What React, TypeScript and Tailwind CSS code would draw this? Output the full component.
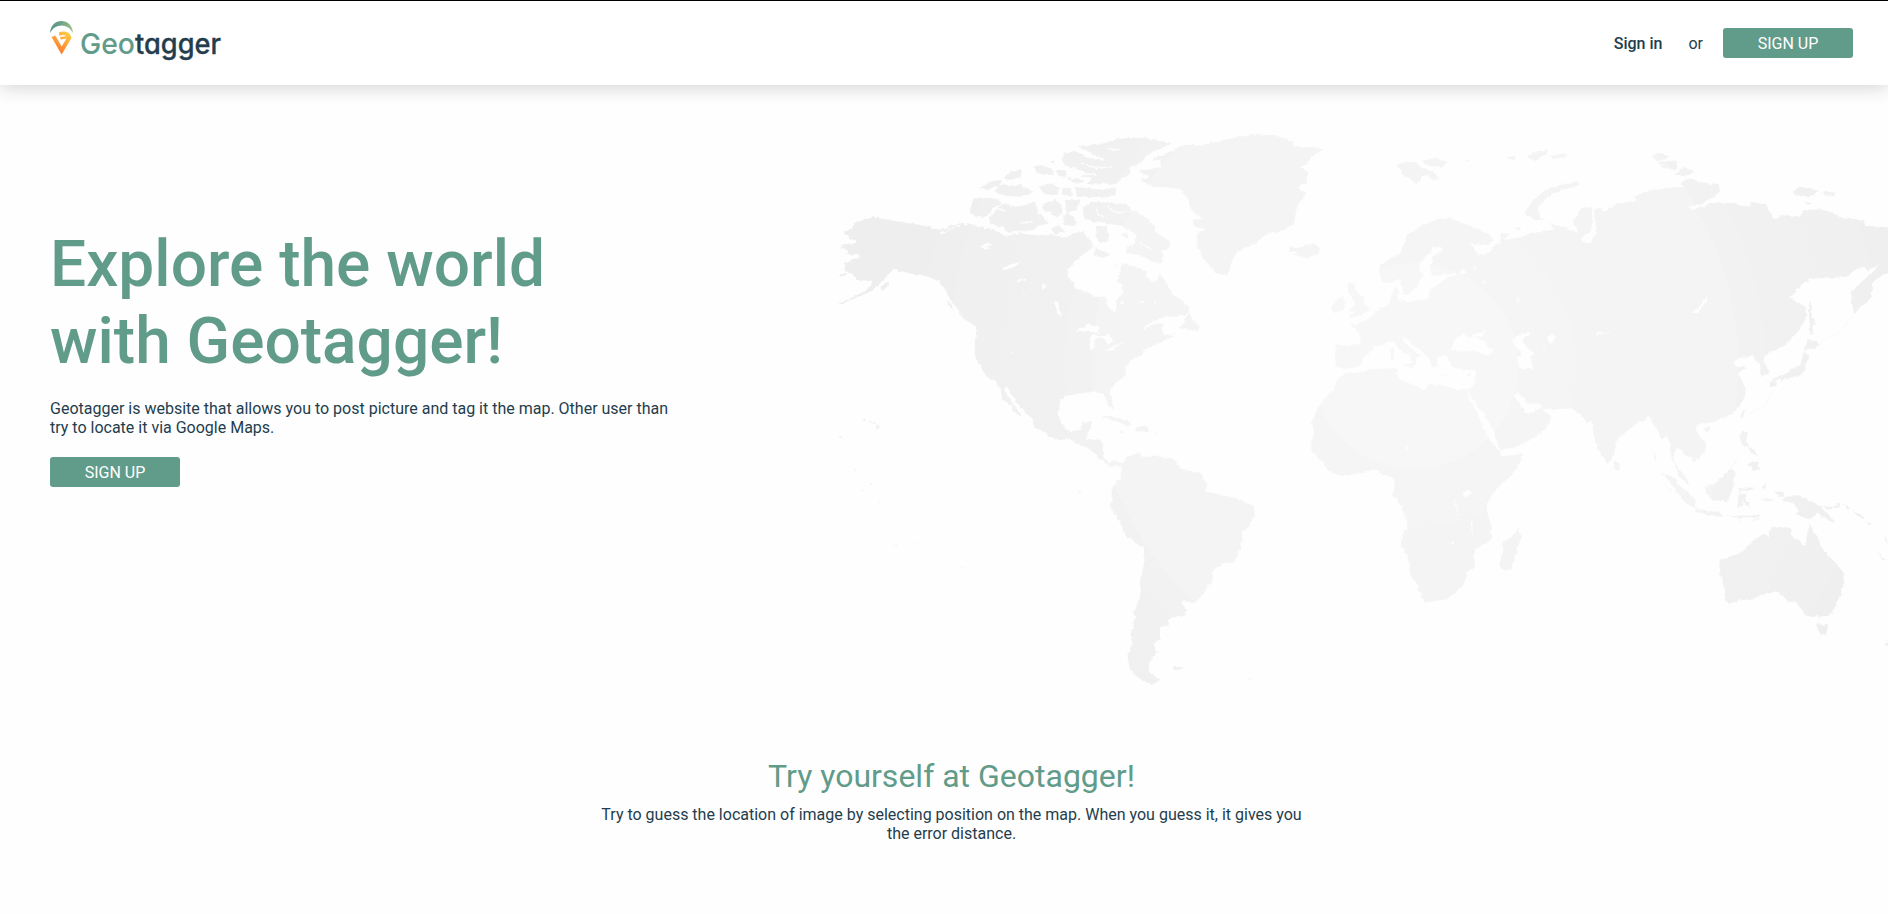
import React from "react";

function LogoMark() {
  return (
    <svg width="24" height="36" viewBox="0 0 24 36" className="shrink-0">
      <defs>
        <linearGradient id="arc" x1="0" y1="0" x2="1" y2="0">
          <stop offset="0.35" stopColor="#619b8a" />
          <stop offset="1" stopColor="#a1c181" />
        </linearGradient>
        <linearGradient id="pin" gradientUnits="userSpaceOnUse" x1="18" y1="13" x2="8" y2="30">
          <stop offset="0" stopColor="#fcca46" />
          <stop offset="1" stopColor="#fe7f2d" />
        </linearGradient>
      </defs>
      <path d="M0 13C0.600 5 5.500 1 11.500 1S22.400 5 23 13C20.500 8.200 16.500 5.400 11.500 5.400S2.500 8.200 0 13Z" fill="url(#arc)" />
      <path d="M1.500 17L5.300 15.500L11.700 26.500L16.500 18.500L10.800 19.500L10 17L16.500 16C14.500 14.900 12.500 14.800 9.300 15.800L9 12.200C14.500 10.500 20.500 12 21.500 18L11.600 34.500Z" fill="url(#pin)" />
    </svg>
  );
}

function Logo() {
  return (
    <a href="#" className="flex items-start" aria-label="Geotagger">
      <LogoMark />
      <svg width="148" height="44" viewBox="0 0 148 44" className="ml-1.5" fontFamily="Inter, sans-serif" style={{ fontFeatureSettings: '"cv11"' }}>
        <text x="0" y="33.500" fontSize="29" fontWeight="500" fill="#619b8a" textLength="55" lengthAdjust="spacingAndGlyphs">Geo</text>
        <text x="55" y="33.500" fontSize="28" fontWeight="500" fill="#233d4d" stroke="#233d4d" strokeWidth="0.300" textLength="86" lengthAdjust="spacingAndGlyphs">tagger</text>
      </svg>
    </a>
  );
}

function SignUp() {
  return (
    <button className="h-[30px] w-[130px] rounded-[3px] bg-[#619b8a] text-base leading-[19px] text-white">SIGN UP</button>
  );
}

const northAmerica =
  "M160 292L195 298L240 305L285 312L330 322L360 330L390 318L425 308L440 318L445 308L470 320L500 325L540 338L560 347L600 340L640 345L690 345L735 352L760 340L790 335L800 350L815 365L822 380L795 400L765 425L745 450L743 470L760 485L765 505L800 515L830 530L858 530L862 560L885 578L890 555L887 540L910 520L908 495L890 485L900 455L905 430L935 435L960 445L980 455L980 475L990 485L1005 485L1020 460L1040 490L1060 525L1085 540L1105 560L1108 578L1075 590L1040 590L1000 600L975 620L968 630L1000 612L1040 608L1025 625L1030 640L1055 645L1070 640L1050 655L1015 670L990 680L970 690L968 705L945 712L930 725L915 740L918 765L900 780L875 800L868 815L872 830L880 850L878 865L868 860L858 840L850 820L830 818L815 815L790 820L760 823L735 828L720 842L718 870L713 885L722 905L735 925L750 935L780 928L788 908L815 903L812 925L800 945L800 960L835 958L850 968L848 1000L850 1015L870 1028L885 1022L910 1032L905 1040L885 1032L875 1042L860 1032L835 1015L825 998L800 982L770 972L740 955L725 962L690 950L660 930L640 915L640 900L620 880L600 860L585 840L570 815L558 800L552 805L560 825L575 845L590 870L605 885L600 888L580 875L575 855L550 840L545 820L535 795L525 782L500 770L485 745L470 720L464 700L465 670L468 630L460 615L430 595L415 570L395 545L375 510L360 485L335 475L310 465L280 462L250 455L220 448L200 470L180 490L150 515L110 532L60 555L58 549L85 540L130 515L155 495L155 482L110 480L100 462L75 455L75 432L95 420L120 412L115 405L80 402L85 390L60 382L75 372L115 370L85 350L70 338L95 325L105 310L130 300Z";

const arcticIslands = [
  "M775 82L850 70L890 58L940 52L1000 58L1055 70L1040 80L990 100L965 125L930 140L932 160L895 185L880 193L800 192L815 172L780 170L795 155L735 135L725 118L735 100L765 93L810 115L850 122L815 100Z",
  "M460 235L495 232L525 236L548 248L520 265L500 290L470 290L450 278Z",
  "M550 250L585 262L615 255L640 245L650 255L655 280L680 300L685 312L660 315L640 330L600 335L560 335L545 320L510 312L505 300L520 275Z",
  "M480 205L510 185L548 178L540 195L500 210Z",
  "M530 205L545 193L575 200L600 195L620 205L640 215L600 230L560 228L525 215Z",
  "M550 175L570 155L605 150L605 170L570 180Z",
  "M640 140L665 135L700 150L702 165L670 165L650 155Z",
  "M655 200L700 190L718 205L712 225L670 222Z",
  "M706 150L735 150L742 168L718 172Z",
  "M690 123L706 122L702 130ZM740 172L775 178L795 186L760 188Z",
  "M765 200L830 208L890 205L885 225L850 232L770 230Z",
  "M725 205L755 205L755 228L728 226Z",
  "M670 250L710 240L728 262L725 285L705 290L690 275L668 268Z",
  "M735 240L780 240L770 270L740 278Z",
  "M730 285L750 280L768 305L760 322L730 312Z",
  "M690 325L715 315L735 335L710 342Z",
  "M790 262L815 245L880 248L920 252L935 270L975 290L1000 310L1005 335L1055 368L1045 385L1025 390L1028 418L1020 432L990 420L960 405L920 400L918 385L945 370L950 345L930 330L905 318L870 312L850 305L820 308L795 295L785 280Z",
  "M828 318L860 318L868 345L860 370L835 368L828 345Z",
  "M820 410L828 382L850 395L872 402L860 412L840 408Z",
  "M905 345L918 338L928 348L920 357Z",
  "M885 432L895 430L890 440Z",
  "M370 485L385 510L400 530L388 525ZM380 540L392 550L404 572L390 562Z",
  "M430 590L462 595L485 622L465 615Z",
  "M180 502L204 485L202 500L185 512Z",
  "M60 462L76 462L74 468L60 466Z",
  "M840 895L865 886L900 895L935 912L920 918L890 904L862 896Z",
  "M945 920L970 918L992 932L965 935L945 933ZM898 932L915 936L905 940ZM1000 932L1018 935L1008 938Z",
  "M168 914L179 921L169 929ZM148 902L155 905L150 909ZM130 896L138 898L134 901ZM158 908L166 911L160 913ZM59 949L66 952L61 955Z",
];

const eurasia =
  "M450 295L490 310L530 325L570 345L580 360L560 375L520 372L505 368L525 385L530 400L550 405L575 390L580 375L600 370L602 345L610 335L625 345L610 360L640 355L690 340L740 335L762 328L745 310L790 320L835 338L820 300L835 285L845 260L875 265L878 300L872 335L845 350L845 365L870 370L890 340L885 300L882 275L895 262L915 275L934 262L955 250L1010 243L1000 230L1040 215L1100 205L1150 200L1145 185L1170 175L1200 185L1255 195L1262 210L1250 225L1220 245L1280 248L1350 260L1355 245L1400 255L1410 275L1425 298L1440 285L1500 290L1510 270L1560 268L1600 280L1625 295L1690 300L1700 318L1770 322V460L1745 465L1720 485L1715 510L1715 535L1690 555L1662 582L1655 540L1655 515L1680 490L1715 460L1738 432L1722 438L1705 455L1694 440L1670 445L1640 470L1580 475L1530 475L1500 500L1465 535L1490 545L1515 560L1520 590L1505 620L1480 650L1455 675L1430 690L1410 695L1390 715L1400 740L1407 760L1380 770L1382 740L1365 715L1355 705L1325 718L1335 705L1300 725L1310 740L1340 740L1315 760L1325 780L1338 800L1335 830L1315 865L1290 885L1250 900L1225 910L1195 910L1185 925L1200 950L1217 970L1217 995L1195 1015L1180 1028L1175 1012L1150 1000L1135 985L1128 985L1120 1020L1135 1045L1155 1065L1169 1098L1139 1070L1126 1040L1114 1015L1109 970L1104 950L1084 958L1072 930L1054 900L1044 885L1034 900L1009 910L974 940L946 965L944 1000L934 1020L922 1032L904 1005L884 960L874 900L860 910L850 890L815 865L770 868L725 865L720 850L690 852L665 830L655 815L645 820L650 840L665 860L680 878L705 875L722 858L730 870L755 890L735 930L690 960L650 980L600 990L590 965L575 920L550 880L515 835L500 808L515 805L528 765L525 750L490 750L455 740L445 715L440 705L410 712L415 740L400 740L385 715L375 705L365 690L335 675L320 655L308 652L310 665L340 690L365 710L350 712L350 730L335 745L310 738L340 728L325 705L300 690L285 670L270 663L245 675L225 680L205 700L190 715L185 735L155 745L130 745L108 740L105 710L107 675L150 675L178 672L180 650L165 625L150 615L185 608L210 592L235 570L270 550L275 520L290 500L300 515L290 540L330 545L385 535L390 510L420 490L440 472L470 465L465 460L420 468L395 465L390 440L400 410L428 390L425 382L400 382L390 400L360 425L358 450L370 465L350 500L325 525L312 525L300 480L285 480L270 492L245 485L238 440L260 420L300 400L320 345L370 315L410 298Z";

const eurasiaIslands = [
  "M145 488L165 488L170 515L190 530L195 550L208 572L185 585L145 595L162 575L148 572L165 555L158 535L140 510Z",
  "M100 548L125 530L135 540L132 570L105 578L95 570Z",
  "M292 135L315 125L350 128L365 145L400 155L415 175L400 180L375 160L365 175L350 193L335 180L310 165ZM365 125L400 115L445 125L430 140L385 138Z",
  "M675 280L700 240L735 210L790 192L835 186L838 195L790 210L750 225L720 255L715 280L732 300L705 302Z",
  "M615 115L645 108L645 120ZM680 108L700 98L745 90L740 105L700 125ZM750 105L803 100L795 110L760 118ZM485 122L508 119L500 124Z",
  "M645 325L660 320L662 332ZM272 685L282 680L282 720L272 720ZM416 764L438 764L430 769ZM495 768L515 760L505 770Z",
  "M1055 108L1075 98L1105 105L1100 118L1065 120ZM1070 125L1130 122L1132 148L1090 145ZM1125 165L1150 140L1185 155L1165 165Z",
  "M1478 212L1500 200L1555 212L1540 228L1490 228ZM1565 215L1605 218L1605 228L1575 226ZM1508 245L1540 250L1520 255Z",
  "M1525 545L1535 550L1535 590L1552 612L1538 615L1535 640L1544 642L1530 645Z",
  "M1524 655L1555 670L1545 688L1525 685L1510 695L1518 675Z",
  "M1510 695L1525 705L1522 725L1510 762L1485 772L1460 775L1430 780L1415 785L1420 775L1460 762L1480 745L1500 735L1510 715Z",
  "M1412 785L1430 785L1425 802L1412 800ZM1438 775L1455 772L1445 785Z",
  "M1323 875L1335 866L1330 890L1322 895ZM1212 925L1228 918L1232 928L1218 938Z",
  "M940 1020L958 1030L960 1050L945 1052Z",
];

const africa =
  "M168 95L190 100L250 88L320 85L325 115L360 130L405 150L415 132L450 135L500 148L530 148L540 180L565 225L580 265L600 300L625 330L640 350L700 338L690 370L665 405L620 445L590 490L595 530L605 560L603 600L560 625L550 645L555 680L530 695L525 725L500 755L470 778L405 788L393 770L380 730L362 705L355 660L333 615L335 590L352 560L345 525L330 490L307 460L315 425L300 408L275 405L265 390L240 390L205 402L150 408L115 390L100 370L65 335L62 305L72 275L65 245L85 205L100 180L130 150L140 120ZM685 563L695 590L680 630L665 685L645 695L630 685L630 660L640 640L637 605L665 590Z";

const southAmerica =
  "M185 75L200 50L240 38L245 50L300 50L340 58L370 90L420 98L443 135L435 155L490 165L540 178L580 198L585 225L565 260L547 275L545 310L525 365L490 370L458 395L455 425L430 460L405 488L365 483L380 510L370 528L328 533L325 558L300 560L300 600L280 610L293 635L265 670L270 695L300 722L275 735L235 715L210 690L203 650L215 620L215 580L225 530L222 515L240 470L243 420L252 370L252 325L200 290L180 245L150 200L155 180L155 155L165 130L185 110ZM338 682L368 680L360 690L342 690ZM555 710L575 720L565 718ZM54 150L64 154L58 158Z";

const greenland =
  "M175 155L245 140L240 120L215 118L270 95L310 75L365 75L430 60L530 42L600 50L640 65L640 80L700 82L732 88L700 105L680 130L660 140L685 160L680 190L655 200L680 220L650 260L645 300L640 315L600 335L550 345L530 370L490 385L465 405L455 435L440 468L405 458L375 420L350 380L350 345L375 325L345 320L340 300L375 295L350 285L330 265L325 235L300 208L270 203L215 200L180 180L210 168ZM625 378L650 385L670 375L700 372L722 385L715 400L680 415L640 405L655 398L628 392ZM328 578L335 600L355 615L355 633L300 625L320 590Z";

const oceania = [
  "M665 370L680 400L690 410L700 445L725 470L740 485L765 515L768 550L755 590L738 625L735 640L700 652L685 645L675 652L650 645L635 620L620 605L600 605L590 590L570 575L520 585L490 598L455 600L430 612L408 600L412 575L395 520L395 480L430 468L465 455L485 430L520 402L540 412L550 385L575 378L612 385L608 405L650 438L658 420L658 385Z",
  "M687 670L705 676L720 671L719 688L712 703L700 706L690 690Z",
  "M352 258L375 255L400 230L430 205L445 220L435 240L438 260L425 290L415 305L370 298L355 280Z",
  "M222 218L250 228L285 265L310 285L322 300L320 325L290 305L270 280L250 250Z",
  "M320 325L350 330L400 338L405 350L360 345L325 335Z",
  "M410 345L440 348L490 346L520 344L510 351L450 353ZM490 363L520 349L510 359ZM445 357L462 362L455 367Z",
  "M455 263L500 262L503 253L495 269L460 271L458 283L478 281L470 295L488 318L475 317L465 300L460 322L448 320L450 298Z",
  "M560 275L585 275L590 290L570 290ZM600 290L630 285L700 320L712 335L745 368L720 362L690 340L665 358L625 345L630 325L610 308L580 300Z",
  "M700 319L735 321L758 306L755 322L725 329ZM762 309L786 325L780 329ZM790 328L832 355L820 357ZM835 360L852 370L845 373Z",
  "M460 95L475 95L475 120L485 140L465 138L455 115ZM478 140L500 150L507 168L490 160ZM480 193L510 180L515 210L498 212ZM428 203L459 158L436 196Z",
  "M524 260L533 248L531 277ZM510 299L560 296L550 303ZM868 459L896 481L885 481ZM889 408L900 427L894 427ZM890 735L900 718V738Z",
  "M197 145L202 165L206 192L199 175ZM224 246L262 287L244 270Z",
];

const lakes = [
  "M480 378L500 370L520 375L500 380L510 388L490 385Z",
  "M545 448L570 435L600 425L585 440L555 450Z",
  "M700 548L715 545L725 590L710 580Z",
  "M770 635L800 612L835 622L833 638L805 632Z",
  "M808 660L820 645L845 645L825 658L820 690L810 690Z",
  "M840 645L870 645L880 660L865 675L855 660ZM848 692L890 675L914 665L880 688Z",
  "M570 692L580 700L576 705ZM608 518L618 522L612 524ZM670 490L675 500L668 510Z",
];

const inlandSeas = [
  "M455 690L465 655L490 640L505 652L535 655L585 695L560 705L520 690L485 695ZM515 645L560 630L545 650L525 652Z",
  "M635 660L650 648L690 635L685 650L668 655L670 670L690 690L705 700L690 710L698 748L660 745L652 730L655 710L665 705Z",
  "M742 650L755 640L768 650L758 668L742 665ZM730 690L738 675L732 695Z",
  "M478 450L492 445L498 462L482 462ZM520 435L530 445L522 450ZM545 478L558 490L550 490Z",
  "M1222 528L1220 545L1195 575L1170 580L1195 565ZM882 650L895 638L935 638L900 643ZM650 540L668 530L650 548Z",
  "M1162 265L1255 232L1225 255L1180 270ZM645 818L665 838L640 830Z",
];

const africanLakes =
  "M522 455L540 448L545 460L530 472L520 468ZM497 470L500 510L512 530L505 528L495 500ZM542 540L547 545L547 575L552 588L545 580ZM347 315L362 325L352 328ZM480 612L495 605L488 614ZM560 410L566 425L562 422Z";

function WorldMap() {
  return (
    <svg width="1068" height="620" viewBox="0 0 3204 1860" className="shrink-0" aria-hidden="true">
      <defs>
        <radialGradient id="rings" gradientUnits="userSpaceOnUse" cx="1785" cy="738" r="2000">
          <stop offset="0.1545" stopColor="#f7f7f7" />
          <stop offset="0.1545" stopColor="#f5f5f5" />
          <stop offset="0.2415" stopColor="#f5f5f5" />
          <stop offset="0.2415" stopColor="#f4f4f4" />
          <stop offset="0.4845" stopColor="#f4f4f4" />
          <stop offset="0.4845" stopColor="#f2f2f3" />
          <stop offset="0.525" stopColor="#f2f2f3" />
          <stop offset="0.525" stopColor="#f1f1f1" />
          <stop offset="0.699" stopColor="#f0f0f0" />
          <stop offset="0.699" stopColor="#efeff0" />
          <stop offset="0.744" stopColor="#efeff0" />
          <stop offset="0.744" stopColor="#eeeeee" />
        </radialGradient>
        <filter id="coast" filterUnits="userSpaceOnUse" x="0" y="0" width="3204" height="1860" colorInterpolationFilters="sRGB">
          <feTurbulence type="fractalNoise" baseFrequency="0.07" numOctaves="3" seed="4" />
          <feDisplacementMap in="SourceGraphic" scale="12" xChannelSelector="R" yChannelSelector="G" />
        </filter>
        <mask id="land" maskUnits="userSpaceOnUse" x="0" y="0" width="3204" height="1860">
          <g filter="url(#coast)" fill="#fff">
            <path d={northAmerica} />
            {arcticIslands.map((d) => <path key={d} d={d} />)}
            <g transform="translate(780 0)"><path d={greenland} /></g>
            <g transform="translate(720 960)"><path d={southAmerica} /></g>
            <g transform="translate(1440 0)">
              <path d={eurasia} />
              {eurasiaIslands.map((d) => <path key={d} d={d} />)}
            </g>
            <g transform="translate(1410 660)"><path d={africa} /></g>
            <g transform="translate(2304 840)">
              {oceania.map((d) => <path key={d} d={d} />)}
            </g>
            <g fill="#000">
              {lakes.map((d) => <path key={d} d={d} />)}
              <g transform="translate(1440 0)">
                {inlandSeas.map((d) => <path key={d} d={d} />)}
              </g>
              <g transform="translate(1410 660)"><path d={africanLakes} /></g>
            </g>
            <path
              d="M800 98L850 118M780 128L830 145L880 140M790 160L830 165M860 85L900 90M860 258L890 280L930 275M830 265L835 285L860 295M960 370L1000 390M590 485L620 475M530 265L560 275M600 310L640 305M900 550L915 550M955 548L975 545M1000 545L1010 548M360 340L420 315"
              stroke="#000"
              strokeWidth="4"
              fill="none"
            />
          </g>
          <path
            d="M890 855L905 880M915 875L940 905M1055 940L1062 985L1052 1000M200 1264L230 1278M240 1250L295 1272L325 1285M310 1184L332 1208M125 1310L155 1302M190 1325L250 1340"
            stroke="#666"
            strokeWidth="3"
            strokeDasharray="4 6"
            fill="none"
          />
          <path d="M2992 672L3020 655L3060 635L3098 588M2790 878L2830 862L2862 808" stroke="#777" strokeWidth="3" strokeDasharray="10 5" fill="none" />
          <path d="M57 949h6v5h-6zM102 1048h5v4h-5zM150 1091h6v4h-6zM125 1109h5v4h-5zM176 1145h5v3h-5zM226 1276h6v4h-6zM425 1341h5v3h-5zM128 896h9v5h-9zM147 903h7v5h-7zM158 908h8v5h-8zM168 916l10 5l-9 9z" fill="#bbb" />
        </mask>
      </defs>
      <rect width="3204" height="1860" fill="url(#rings)" mask="url(#land)" />
    </svg>
  );
}

export default function App() {
  return (
    <div className="flex h-[914px] w-full flex-col overflow-hidden bg-[#fefefe] font-[Roboto,sans-serif] text-base leading-[19px] text-[#233d4d]">
      <header className="flex h-[85px] shrink-0 items-start justify-between border-t border-black bg-white pr-[35px] pl-[50px] shadow-[0_4px_16px_rgba(0,0,0,0.15)]">
        <div className="pt-[19px]">
          <Logo />
        </div>
        <nav className="flex items-center pt-[27px]">
          <a href="#" className="font-medium">Sign in</a>
          <span className="mr-5 ml-[26px]">or</span>
          <SignUp />
        </nav>
      </header>

      <main className="flex grow flex-col">
        <section className="flex h-[655px] shrink-0 justify-between pl-[50px]">
          <div className="flex w-[640px] flex-col items-start pt-[141px]">
            <h1 className="w-[560px] text-[64px] leading-[77px] font-medium text-[#619b8a]">Explore the world with Geotagger!</h1>
            <p className="mt-[19px] w-[625px]">
              Geotagger is website that allows you to post picture and tag it the map. Other user than try to locate it via Google Maps.
            </p>
            <div className="mt-5">
              <SignUp />
            </div>
          </div>
          <div className="pt-[35px]">
            <WorldMap />
          </div>
        </section>

        <section className="flex flex-col items-center pt-[17px] pr-[35px] pl-[50px] text-center">
          <h2 className="text-[32px] leading-[38px] text-[#619b8a]">Try yourself at Geotagger!</h2>
          <p className="mt-2.5 w-[720px]">
            Try to guess the location of image by selecting position on the map. When you guess it, it gives you the error distance.
          </p>
        </section>
      </main>
    </div>
  );
}
